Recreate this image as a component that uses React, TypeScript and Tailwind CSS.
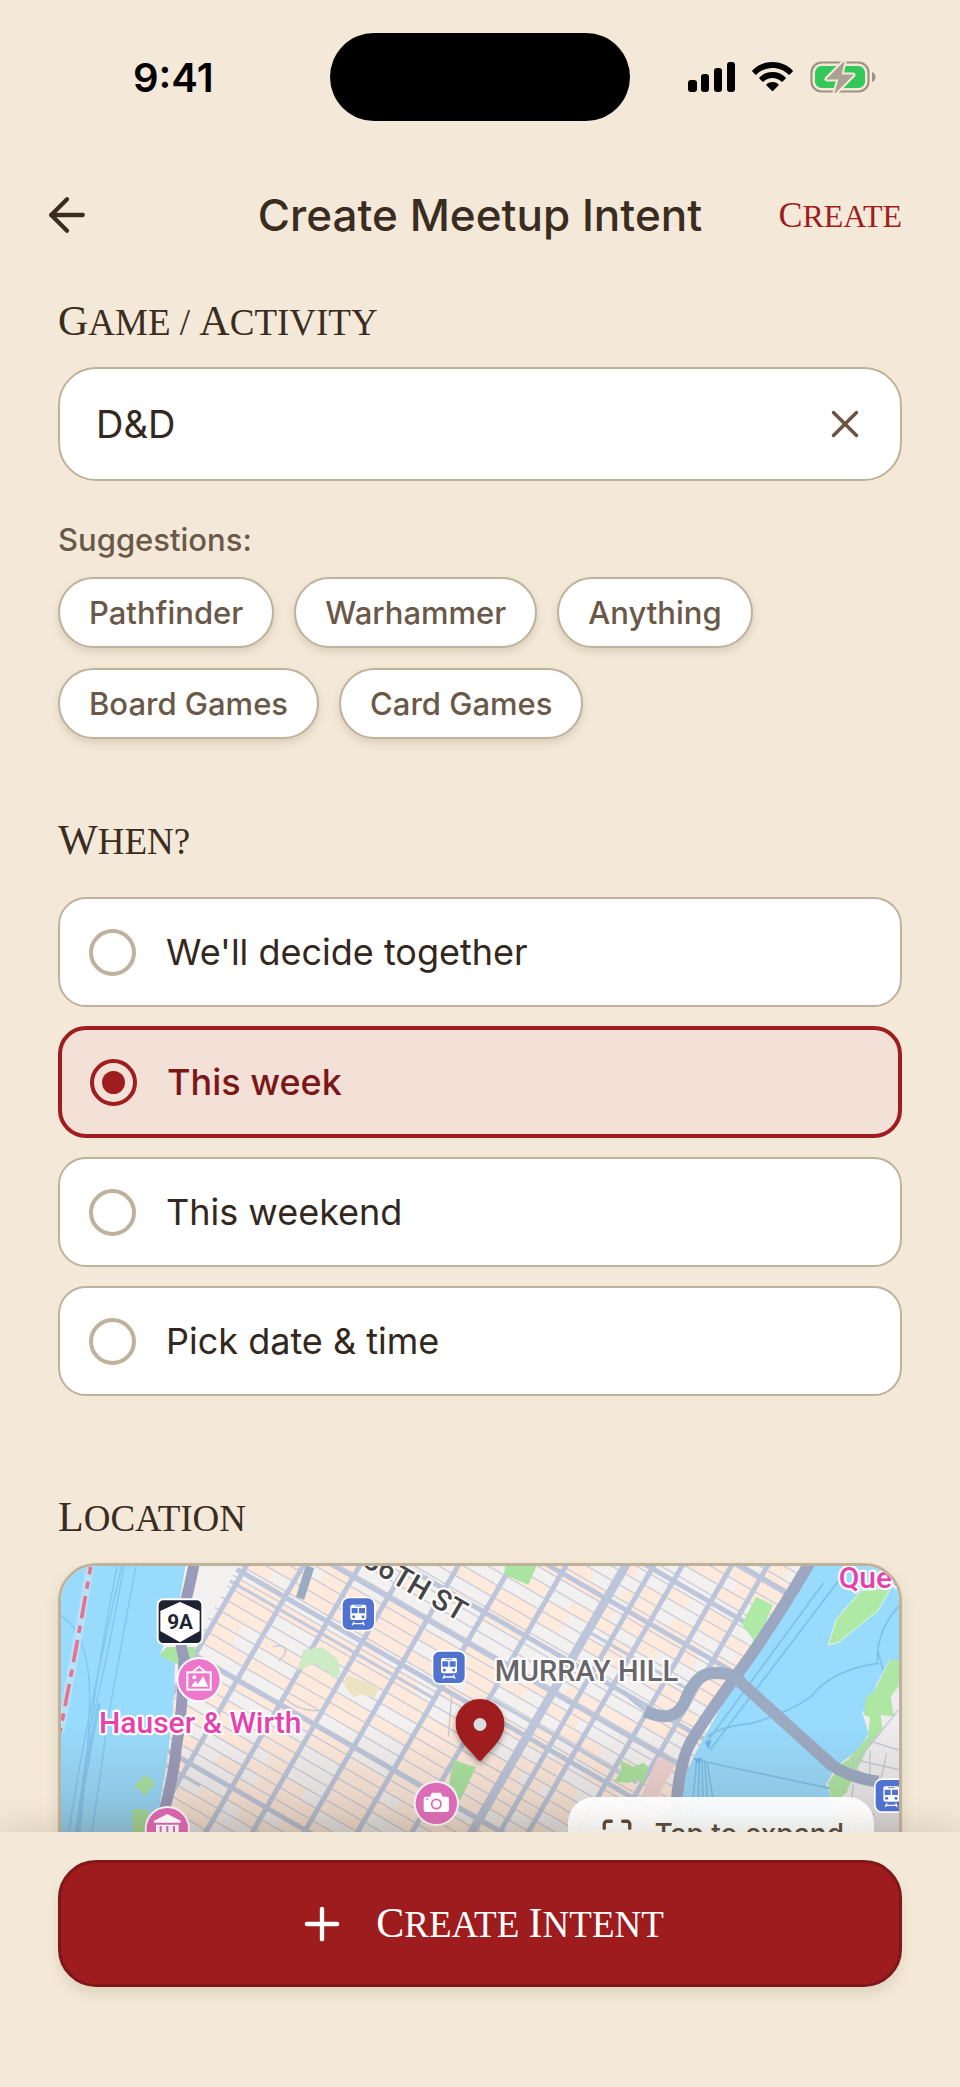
import { useState } from "react";
import { ArrowLeft, Maximize, Plus, X } from "lucide-react";

const suggestions = ["Pathfinder", "Warhammer", "Anything", "Board Games", "Card Games"];

const whenOptions = [
  { id: "together", label: "We'll decide together" },
  { id: "week", label: "This week" },
  { id: "weekend", label: "This weekend" },
  { id: "pick", label: "Pick date & time" },
];

// Capitals with a slightly taller first letter on every word
function Caps({ text, small }: { text: string; small?: boolean }) {
  return (
    <>
      {text.split(" ").map((word, i) => (
        <span key={word}>
          {i > 0 && " "}
          <span
            className={
              small
                ? "inline-block uppercase text-[32px] first-letter:text-[36px]"
                : "inline-block uppercase text-[37px] first-letter:text-[42px]"
            }
          >
            {word}
          </span>
        </span>
      ))}
    </>
  );
}

function SectionTitle({ text }: { text: string }) {
  return (
    <h2 className="font-['Liberation_Serif',serif] text-[37px] leading-10 text-[#3a2c20]">
      <Caps text={text} />
    </h2>
  );
}

function StatusBar() {
  return (
    <div className="grid grid-cols-[1fr_300px_1fr] items-center pt-[33px]">
      <span className="pl-[133px] pt-0.5 font-semibold text-[40px] leading-10 text-black">9:41</span>
      <div className="h-[88px] rounded-full bg-black" />
      <div className="flex items-center gap-[17px] pl-[58px]">
        <svg viewBox="0 0 47 30" className="h-[30px] w-[47px]">
          <rect x="0" y="18" width="9" height="12" rx="3" />
          <rect x="13" y="12" width="8" height="18" rx="3" />
          <rect x="26" y="6" width="8" height="24" rx="3" />
          <rect x="39" y="0" width="8" height="30" rx="3" />
        </svg>
        <svg viewBox="0 0 41 30" className="h-[30px] w-[41px]">
          <path d="M20.500 0C12.800 0 5.600 3 0.500 8.200c-.5.500-.5 1 0 1.500l2.700 2.700c.4.400 1 .4 1.400 0C8.800 8.300 14.400 6 20.500 6s11.700 2.300 15.900 6.400c.4.400 1 .4 1.400 0l2.700-2.700c.5-.5.500-1 0-1.500C35.400 3 28.200 0 20.500 0Z" />
          <path d="M20.500 10c-5 0-9.500 1.900-12.900 5.200-.5.500-.5 1 0 1.500l2.700 2.700c.4.400 1 .4 1.400 0 2.300-2.200 5.400-3.500 8.800-3.500s6.500 1.300 8.800 3.500c.4.400 1 .4 1.400 0l2.700-2.700c.5-.5.500-1 0-1.500C30 11.900 25.500 10 20.500 10Z" />
          <path d="M20.500 20c-2.300 0-4.300.8-5.900 2.200-.4.400-.4 1 0 1.400l5.200 5.200c.4.400 1 .4 1.400 0l5.200-5.200c.4-.4.400-1 0-1.400C24.800 20.800 22.800 20 20.500 20Z" />
        </svg>
        <svg viewBox="0 0 66 34" className="h-[34px] w-[66px]">
          <rect x="1.500" y="2.500" width="57" height="29" rx="10" fill="none" stroke="#9c9283" strokeWidth="2.200" />
          <rect x="5" y="6" width="50" height="22" rx="6.500" fill="#34c759" />
          <path d="M62 12c2 .6 3.500 2.500 3.500 5S64 21.400 62 22Z" fill="#9c9283" />
          <path d="M34 2 17 19h12l-4 14 18-18H31Z" fill="#aaa193" stroke="#f3e8d7" strokeWidth="5" strokeLinejoin="round" />
          <path d="M34 2 17 19h12l-4 14 18-18H31Z" fill="#aaa193" stroke="#aaa193" strokeLinejoin="round" />
        </svg>
      </div>
    </div>
  );
}

// Street grid, drawn in a frame turned by 30 degrees
const avenues = [560, 707, 854, 975, 1110, 1248, 1390, 1545, 1618, 1692, 1820, 1914, 2030];
const crossStreets = [-1010, -870, -723, -505, -400, -245, 42, 330];
const minorStreets = Array.from({ length: 58 }, (_, i) => -1260 + i * 37);

function noise(a: number, b: number) {
  const n = Math.sin(a * 12.9898 + b * 78.233) * 43758.5453;
  return n - Math.floor(n);
}

function StreetGrid() {
  return (
    <g transform="rotate(30)">
      {avenues.slice(0, -1).map((u, i) =>
        minorStreets.map((v, j) => {
          const r = noise(i + 1, j + 3);
          if (r < 0.3) return null;
          const full = avenues[i + 1] - u;
          const w = r > 0.5 ? full : full * 0.55;
          return (
            <rect key={`${i}-${j}`} x={r > 0.4 ? u : u + full - w} y={v} width={w} height={38} fill="#feeadc" />
          );
        })
      )}
      {minorStreets.map((v) => (
        <path key={v} d={`M540 ${v}H2030`} stroke="#c9cdd8" strokeWidth="4" />
      ))}
      {crossStreets.map((v) => (
        <path key={v} d={`M540 ${v}H2030`} stroke="#bdc6da" strokeWidth="15" />
      ))}
      <path d="M540 -205H1250M1400 -290H1900M1545 -610H1914M540 372H770" stroke="#c3cadb" strokeWidth="10" />
      {avenues.map((u) => (
        <path key={u} d={`M${u} -1300V900`} stroke="#bcc5da" strokeWidth={u === 1545 ? 26 : 15} />
      ))}
    </g>
  );
}

function TrainStop({ x, y }: { x: number; y: number }) {
  return (
    <g transform={`translate(${x} ${y})`}>
      <rect x="-5" y="-5" width="104" height="104" rx="24" fill="#fff" />
      <rect width="94" height="94" rx="19" fill="#5272d0" />
      <rect x="23" y="19" width="48" height="46" rx="6" fill="#fff" />
      <path d="M27 29h18v16H27zM49 29h18v16H49z" fill="#5272d0" />
      <path d="M37 23h20" stroke="#5272d0" strokeWidth="2.500" />
      <circle cx="33" cy="55" r="4.500" fill="#5272d0" />
      <circle cx="61" cy="55" r="4.500" fill="#5272d0" />
      <path d="M34 70l-5 11M60 70l5 11M31 76h32" stroke="#fff" strokeWidth="4" />
    </g>
  );
}

function CityMap() {
  return (
    <svg
      viewBox="63 48 2514 987"
      preserveAspectRatio="xMidYMin slice"
      className="block h-full w-full font-[Roboto,sans-serif]"
      fill="none"
      role="img"
      aria-label="Map of Midtown Manhattan"
    >
      <defs>
        <linearGradient id="map-shade" x1="0" y1="0" x2="0" y2="1">
          <stop offset="0" stopColor="#5b4a3a" stopOpacity="0" />
          <stop offset="1" stopColor="#4b4540" stopOpacity="0.3" />
        </linearGradient>
      </defs>
      <rect x="0" y="0" width="2700" height="1100" fill="#f3f0f0" />
      <StreetGrid />

      {/* parks */}
      <path d="M1395 48h95l-25 56-72-30ZM1240 630l68 22-48 100-34-40Z" fill="#a9e4a0" />
      <path d="M1740 630l40 20 30-12 16 14-16 50-22-14-24 12-42-6 22-30Z" fill="#abe3a0" />
      <path d="M790 300l60-8 42 36 10 44-20 14-30-30-30-14-50 20Z" fill="#cdebc4" />
      <path d="M920 375l98 36-14 34-40-12-24 8-26-34Z" fill="#ece3c4" />
      <path d="M1852 622l54 20-52 98h-50Z" fill="#efd3d2" />
      <path d="M810 50 780 145" stroke="#9aacc2" strokeWidth="26" />
      <path d="M730 440q50 50 120 40M700 290q40-10 36 20l-20 24M1235 440l-10 120" stroke="#c3c8d5" strokeWidth="4" />

      {/* Hudson */}
      <path d="M0 0h445l-30 170-55 145 45 25-5 130-20 170-20 120 5 300H0Z" fill="#98dbfd" />
      <path d="M445 48h14l-34 130-14 12ZM358 315l22-24h88l-4 26-44 30ZM315 674l32 24-32 40-32-32ZM278 778h46v160h-50Z" fill="#a9e4a0" />
      <path d="M400 600q8 30-24 150" stroke="#a9e4a0" strokeWidth="14" />
      <path d="M462 44q-14 70-30 130-22 80 0 150-6 180-22 260-8 90-40 210v200" stroke="#9a9bbb" strokeWidth="33" />
      <path d="M245 48q-70 300-130 620l-38 240M252 48q-60 330-100 480-18 120-50 360M288 48q-60 320-90 500-10 80-50 350M232 48q-60 290-100 640M62 196q96 60 86 290-6 180-38 430" stroke="#83c4ee" strokeWidth="4" />
      <path d="M178 460q-50 220-75 460" stroke="#84c6f0" strokeWidth="11" />
      <path d="M150 50Q105 320 60 545" stroke="#b9e2f8" strokeWidth="24" />
      <path d="M152 50Q105 320 60 545" stroke="#e8718d" strokeWidth="11" strokeDasharray="68 22 22 22" strokeDashoffset="45" />

      {/* East River */}
      <path d="M2330 0 2270 100 2090 385 2005 540q-80 130-85 220v400h700V0Z" fill="#98dbfd" />
      <path d="M2148 140l50 24-62 160-12-5 16-50-34-46Z" fill="#aeeaa5" />
      <path d="M2365 285l24-78 75-85 90-10-40 70-120 96Z" fill="#aeeaa5" stroke="#e4f5e6" strokeWidth="3" />
      <path d="M2578 340l-30-10-40 76-6 60-36 20 20 64-30 50-68 48-30 56 20 46 180 350h80Z" fill="#eeecee" />
      <path d="M2578 330l-30 2-48 96-20 10-10 56 20 8-6 58-60 70-24 14-36 56 14 60 40-30 28-62 36-70 46-60-6-44 40 6-10-60 30-40Z" fill="#aee6a4" />
      <path d="M2575 480l-80 100-60 70 60 40M2480 570l95 30M2450 630l130 30M2490 600v90M2440 700l-20 200M2540 610l-20 90M2500 790l-20 100" stroke="#c6c9d4" strokeWidth="4" />
      <path d="M2350 100 2005 570M2420 60 2010 600M2575 170q-70 80-62 170-140 20-200 100-70 50-180 80-100 12-130 40M1970 630l400 85M2513 300l16 60M1970 630l-18 200M1978 630l-6 200M1986 630l5 200M1994 630l14 200M2002 640l30 190" stroke="#7fbfe9" strokeWidth="5" />
      <path d="M1960 625h28l-12 18ZM1995 575l20-6-10 30" fill="#6fb4e8" />
      <path d="M2320 20q-100 170-190 300-140 190-180 260-50 90-50 400" stroke="#9ca7c1" strokeWidth="35" />
      <path d="M1750 425q60 60 110 80" stroke="#bac3d8" strokeWidth="10" />
      <path d="M1815 484q90 40 120-30 30-80 80-84 60-6 90 30l270 245q50 36 140 50" stroke="#9caac2" strokeWidth="36" />

      <rect x="63" y="520" width="2514" height="515" fill="url(#map-shade)" />

      {/* labels and points of interest */}
      <g stroke="#fff" strokeWidth="13" strokeLinejoin="round" paintOrder="stroke">
        <text x="177" y="548" fontSize="90" fontWeight="500" fill="#e542ae">Hauser &amp; Wirth</text>
        <text x="1364" y="394" fontSize="87" fontWeight="500" fill="#68666a">MURRAY HILL</text>
        <text x="2396" y="115" fontSize="90" fontWeight="500" fill="#e542ae">Queens</text>
        <text transform="translate(964 46) rotate(30)" fontSize="87" fontWeight="500" fill="#444449">36TH  ST</text>
      </g>

      <rect x="350" y="145" width="140" height="140" rx="20" fill="#fff" />
      <rect x="356" y="151" width="128" height="128" rx="14" fill="#1e2230" />
      <path d="M420 158 477 184v58l-57 32-57-32v-58Z" fill="#fff" stroke="#fff" strokeWidth="4" strokeLinejoin="round" />
      <text x="420" y="237" fontSize="62" fontWeight="700" textAnchor="middle" fill="#20242f">9A</text>

      <circle cx="477" cy="389" r="68" fill="#fff" />
      <circle cx="477" cy="389" r="62" fill="#ef77cb" />
      <rect x="442" y="367" width="70" height="52" stroke="#fff" strokeWidth="6" />
      <path d="M458 366l19-16 19 16" stroke="#fff" strokeWidth="5" />
      <circle cx="463" cy="382" r="6" fill="#fff" />
      <path d="M453 410l13-18 8 10 15-24 16 32Z" fill="#fff" />

      <circle cx="382" cy="836" r="68" fill="#f7f1f4" />
      <circle cx="382" cy="836" r="62" fill="#dd66b4" />
      <path d="M342 812l40-20 40 20v6h-80ZM348 824h68v40h-68Z" fill="#fff" />
      <path d="M362 828v36M382 828v36M402 828v36" stroke="#dd66b4" strokeWidth="6" />

      <circle cx="1189" cy="760" r="68" fill="#f7f1f4" />
      <circle cx="1189" cy="760" r="62" fill="#dd6cb8" />
      <path d="M1158 740h12l6-12h26l6 12h12q7 0 7 7v32q0 7-7 7h-62q-7 0-7-7v-32q0-7 7-7Z" fill="#fff" />
      <circle cx="1189" cy="762" r="14" stroke="#dd6cb8" strokeWidth="5" />
      <circle cx="1162" cy="748" r="3" fill="#dd6cb8" />

      <TrainStop x={908} y={145} />
      <TrainStop x={1180} y={305} />
      <TrainStop x={2507} y={690} />
    </svg>
  );
}

export default function App() {
  const [game, setGame] = useState("D&D");
  const [when, setWhen] = useState("week");

  return (
    <div className="flex h-screen flex-col bg-[#f4e9d8] font-[Inter,sans-serif] text-[#3a2c20]">
      <StatusBar />

      {/* Header */}
      <header className="mt-11 grid h-[100px] shrink-0 grid-cols-[1fr_auto_1fr] items-center px-10">
        <button type="button" aria-label="Back" className="justify-self-start">
          <ArrowLeft className="size-[54px]" strokeWidth={1.900} />
        </button>
        <h1 className="text-[44px] font-medium leading-[50px]">Create Meetup Intent</h1>
        <button
          type="button"
          className="justify-self-end pr-[18px] font-['Liberation_Serif',serif] text-[32px] leading-10 text-[#9f1c1f]"
        >
          <Caps text="Create" small />
        </button>
      </header>

      <main className="min-h-0 flex-1 overflow-y-auto px-[58px] pt-9 [scrollbar-width:none]">
        {/* Game / Activity */}
        <section>
          <SectionTitle text="Game / Activity" />
          <div className="mt-6 flex h-[114px] items-center rounded-[38px] border-2 border-[#beb29d] bg-white pl-9 pr-8">
            <input
              type="text"
              aria-label="Game or activity"
              value={game}
              onChange={(e) => setGame(e.target.value)}
              className="min-w-0 flex-1 bg-transparent text-[38px] leading-[48px] text-[#332820] outline-none"
            />
            <button type="button" aria-label="Clear" onClick={() => setGame("")}>
              <X className="size-[46px] text-[#6a5545]" strokeWidth={1.800} />
            </button>
          </div>

          <p className="mt-[39px] text-[31px] font-medium leading-10 text-[#6a5848]">Suggestions:</p>
          <div className="mt-[17px] flex flex-wrap gap-x-5 gap-y-5">
            {suggestions.map((name) => (
              <button
                key={name}
                type="button"
                onClick={() => setGame(name)}
                className="rounded-full border-2 border-[#beb29d] bg-white px-[29px] py-[14px] text-[31px] font-medium leading-[39px] text-[#6a5848] shadow-[0_4px_8px_rgba(90,70,30,0.16)]"
              >
                {name}
              </button>
            ))}
          </div>
        </section>

        {/* When */}
        <section className="mt-[81px]" role="radiogroup" aria-label="When?">
          <SectionTitle text="When?" />
          <div className="mt-[35px] flex flex-col gap-[19px]">
            {whenOptions.map((option) => {
              const selected = option.id === when;
              return (
                <label
                  key={option.id}
                  className={`flex items-center gap-[30px] rounded-[28px] text-[36px] leading-[50px] ${
                    selected
                      ? "border-4 border-[#9f1c1f] bg-[#f3e0d6] px-7 py-[27px] font-medium text-[#7c1719]"
                      : "border-2 border-[#beb29d] bg-white px-[29px] py-7 text-[#332820]"
                  }`}
                >
                  <input
                    type="radio"
                    name="when"
                    checked={selected}
                    onChange={() => setWhen(option.id)}
                    className="size-[47px] shrink-0 appearance-none rounded-full border-4 border-[#beb29d] bg-clip-content p-2 checked:border-[#9f1c1f] checked:bg-[#9f1c1f]"
                  />
                  {option.label}
                </label>
              );
            })}
          </div>
        </section>

        {/* Location */}
        <section className="mt-[101px] pb-10">
          <SectionTitle text="Location" />
          <div className="relative mt-6 h-[335px] overflow-hidden rounded-[38px] border-[3px] border-[#beb29d] shadow-[0_6px_14px_rgba(90,70,30,0.14)]">
            <CityMap />
            <svg
              viewBox="0 0 49 62"
              className="absolute left-1/2 top-[133px] h-[62px] w-[49px] -translate-x-1/2 drop-shadow-[0_3px_3px_rgba(0,0,0,0.35)]"
            >
              <path d="M24.500 0C11 0 0 11 0 24.500 0 41 17 53 22.500 61q2 2 4 0C32 53 49 41 49 24.500 49 11 38 0 24.500 0Z" fill="#9f1c1f" />
              <circle cx="24.500" cy="25.500" r="6.500" fill="#dcdbe0" />
            </svg>
            <button
              type="button"
              className="absolute bottom-6 right-[25px] flex items-center gap-5 rounded-[26px] bg-white/95 py-[17px] pl-8 pr-[30px] text-[28px] font-medium leading-10 text-[#5c4a3b]"
            >
              <Maximize className="size-[34px]" strokeWidth={2.400} />
              Tap to expand
            </button>
          </div>
        </section>
      </main>

      <footer className="relative shrink-0 bg-[#f4e9d8] px-[58px] pb-[100px] pt-7 shadow-[0_-6px_30px_rgba(90,70,30,0.16)]">
        <button
          type="button"
          className="flex h-[127px] w-full items-center justify-center gap-7 rounded-[38px] border-[3px] border-[#7f171a] bg-[#9f1c1e] font-['Liberation_Serif',serif] text-[37px] leading-10 text-white shadow-[0_8px_12px_rgba(90,70,30,0.12)]"
        >
          <Plus className="size-[52px]" strokeWidth={2} />
          <span>
            <Caps text="Create Intent" />
          </span>
        </button>
      </footer>
    </div>
  );
}
